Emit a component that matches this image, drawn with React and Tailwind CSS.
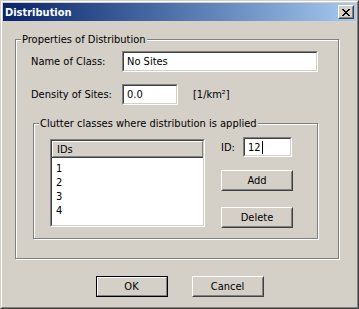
import React from 'react';

// Win2k dialog pieces
function Edit({ className = '', children }) {
  return (
    <div className={`border border-t-[#808080] border-l-[#808080] border-r-white border-b-white ${className}`}>
      <div className="h-full flex items-center pl-[3px] bg-white border border-t-[#404040] border-l-[#404040] border-r-[#D4D0C8] border-b-[#D4D0C8]">
        {children}
      </div>
    </div>
  );
}

function Button({ children, isDefault, className = '' }) {
  if (isDefault) {
    return (
      <div className={`w-[72px] h-[21px] border border-black ${className}`}>
        <div className="h-full flex items-center justify-center border border-t-white border-l-white border-r-[#808080] border-b-[#808080]">
          {children}
        </div>
      </div>
    );
  }
  return (
    <div className={`w-[72px] h-[21px] border border-t-white border-l-white border-r-[#404040] border-b-[#404040] ${className}`}>
      <div className="h-full flex items-center justify-center border border-t-[#D4D0C8] border-l-[#D4D0C8] border-r-[#808080] border-b-[#808080]">
        {children}
      </div>
    </div>
  );
}

function GroupBox({ title, className = '', children }) {
  return (
    <fieldset className={`border border-[#808080] shadow-[inset_1px_1px_0_#fff,1px_1px_0_#fff] ${className}`}>
      <legend className="ml-[5px] px-[1px] bg-[#D4D0C8] leading-[13px]">{title}</legend>
      {children}
    </fieldset>
  );
}

function CloseGlyph() {
  const rows = ['11000011', '01100110', '00111100', '00011000', '00111100', '01100110', '11000011'];
  return (
    <svg width="8" height="7" viewBox="0 0 8 7" shapeRendering="crispEdges">
      {rows.map((r, y) =>
        r.split('').map((c, x) => (c === '1' ? <rect key={`${x}-${y}`} x={x} y={y} width="1" height="1" fill="#000" /> : null))
      )}
    </svg>
  );
}

export default function App() {
  const ids = ['1', '2', '3', '4'];

  return (
    <div className="w-[359px] h-[309px] bg-[#D4D0C8] text-[11px] leading-[13px] text-black font-['DejaVu_Sans_Condensed','Liberation_Sans',sans-serif] border border-t-[#D4D0C8] border-l-[#D4D0C8] border-r-[#404040] border-b-[#404040]">
      <div className="h-full p-px border border-t-white border-l-white border-r-[#808080] border-b-[#808080]">
        <div className="h-[18px] flex items-center justify-between pl-[2px] pr-[2px] bg-gradient-to-r from-[#0A246A] to-[#A6CAF0]">
          <span className="font-bold text-white">Distribution</span>
          <div className="w-[16px] h-[14px] bg-[#D4D0C8] border border-t-white border-l-white border-r-[#404040] border-b-[#404040]">
            <div className="h-full flex items-center justify-center border border-t-[#D4D0C8] border-l-[#D4D0C8] border-r-[#808080] border-b-[#808080]">
              <CloseGlyph />
            </div>
          </div>
        </div>

        <div className="pl-[12px] pt-[12px]">
          <GroupBox title="Properties of Distribution" className="w-[324px]">
            <div className="pl-[15px] pt-[5px] pb-[19px]">
              <div className="flex items-center h-[21px]">
                <span className="w-[91px]">Name of Class:</span>
                <Edit className="w-[196px] h-[21px]">No Sites</Edit>
              </div>
              <div className="flex items-center h-[21px] mt-[12px]">
                <span className="w-[91px]">Density of Sites:</span>
                <Edit className="w-[56px] h-[21px]">0.0</Edit>
                <span className="ml-[15px]">[1/km²]</span>
              </div>

              <GroupBox title="Clutter classes where distribution is applied" className="w-[285px] mt-[12px] ml-[2px]">
                <div className="flex items-start pl-[16px] pt-[7px] pb-[10px]">
                  <div className="w-[155px] h-[88px] mt-[2px] border border-t-[#808080] border-l-[#808080] border-r-white border-b-white">
                    <div className="h-full bg-white border border-t-[#404040] border-l-[#404040] border-r-[#D4D0C8] border-b-[#D4D0C8]">
                      <div className="h-[17px] bg-[#D4D0C8] border-b border-b-[#404040]">
                        <div className="h-full flex items-center pl-[4px] border border-t-white border-l-white border-r-[#808080] border-b-[#808080]">
                          IDs
                        </div>
                      </div>
                      <div className="pl-[4px] pt-[4px]">
                        {ids.map((id) => (
                          <div key={id} className="leading-[14px]">{id}</div>
                        ))}
                      </div>
                    </div>
                  </div>

                  <div className="ml-[16px] flex flex-col">
                    <div className="flex items-center h-[20px]">
                      <span className="w-[22px]">ID:</span>
                      <Edit className="w-[49px] h-[20px]">
                        12<span className="ml-[1px] w-px h-[13px] bg-black" />
                      </Edit>
                    </div>
                    <Button className="mt-[13px]">Add</Button>
                    <Button className="mt-[16px]">Delete</Button>
                  </div>
                </div>
              </GroupBox>
            </div>
          </GroupBox>
        </div>

        <div className="flex justify-center gap-[24px] mt-[17px]">
          <Button isDefault>OK</Button>
          <Button>Cancel</Button>
        </div>
      </div>
    </div>
  );
}
